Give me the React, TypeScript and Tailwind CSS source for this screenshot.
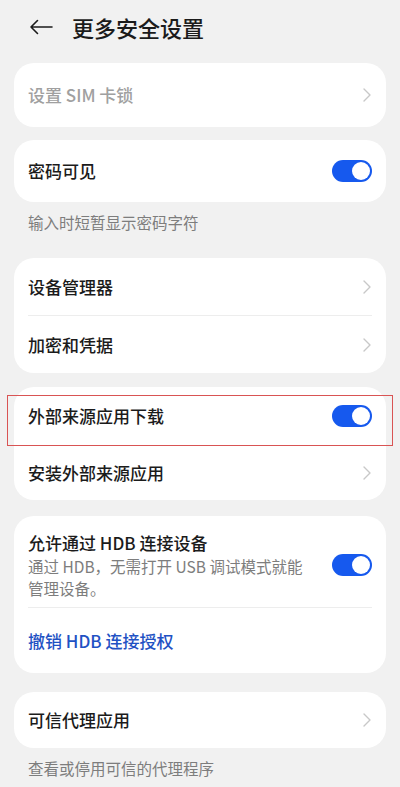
import React from "react";

const FONT = "font-['Noto_Sans_CJK_SC','Noto_Sans',sans-serif]";

const Chevron = () => (
  <svg width="10" height="16" viewBox="0 0 10 16" fill="none" className="shrink-0">
    <path d="M2 2l6 6-6 6" stroke="#c8c8c8" strokeWidth="1.4" strokeLinecap="round" strokeLinejoin="round" />
  </svg>
);

const Toggle = () => (
  <div className="w-[40px] h-[22px] rounded-full bg-[#1659ee] flex items-center justify-end pr-[2px] shrink-0">
    <div className="w-[18px] h-[18px] rounded-full bg-white" />
  </div>
);

const Card = ({ children }: { children: React.ReactNode }) => (
  <div className="bg-white rounded-[20px] px-[14px]">{children}</div>
);

const Row = ({
  label,
  right,
  height = "h-[57px]",
  muted = false,
}: {
  label: string;
  right: React.ReactNode;
  height?: string;
  muted?: boolean;
}) => (
  <div className={`flex items-center justify-between ${height}`}>
    <span className={`text-[17px] font-medium ${muted ? "text-[#a0a0a0]" : "text-[#1b1b1b]"}`}>{label}</span>
    {right}
  </div>
);

const Caption = ({ text }: { text: string }) => (
  <div className="px-[14px] pt-[9px] text-[15.5px] text-[#7d7d7d] leading-[22px]">{text}</div>
);

export default function App() {
  return (
    <div className={`${FONT} w-[400px] min-h-[787px] bg-[#f1f1f1] overflow-hidden`}>
      <div className="flex items-center h-[52px] pl-[29px] pt-[2px]">
        <svg width="24" height="16" viewBox="0 0 24 16" fill="none">
          <path d="M23 8H2M8.5 1.5L2 8l6.5 6.5" stroke="#1b1b1b" strokeWidth="1.6" strokeLinecap="round" strokeLinejoin="round" />
        </svg>
        <h1 className="ml-[19px] text-[22px] font-medium text-[#1b1b1b]">更多安全设置</h1>
      </div>

      <div className="px-[14px] pt-[11px] pb-[10px] flex flex-col">
        <Card>
          <Row label="设置 SIM 卡锁" right={<Chevron />} height="h-[64px]" muted />
        </Card>

        <div className="mt-[13px]">
          <Card>
            <Row label="密码可见" right={<Toggle />} height="h-[62px]" />
          </Card>
          <Caption text="输入时短暂显示密码字符" />
        </div>

        <div className="mt-[25px]">
          <Card>
            <Row label="设备管理器" right={<Chevron />} />
            <div className="h-px bg-[#ededed]" />
            <Row label="加密和凭据" right={<Chevron />} />
          </Card>
        </div>

        <div className="mt-[14px]">
          <Card>
            <div className="relative">
              <Row label="外部来源应用下载" right={<Toggle />} height="h-[58px]" />
              <div className="absolute top-[8px] -bottom-px -left-[21px] -right-[21px] border border-[#d95454] pointer-events-none" />
            </div>
            <Row label="安装外部来源应用" right={<Chevron />} height="h-[55px]" />
          </Card>
        </div>

        <div className="mt-[16px]">
          <Card>
            <div className="flex items-center justify-between pt-[15px] pb-[8px]">
              <div className="flex flex-col">
                <span className="text-[17px] font-medium leading-[24px] text-[#1b1b1b]">允许通过 HDB 连接设备</span>
                <span className="text-[15.5px] leading-[22px] text-[#7d7d7d] w-[285px]">
                  通过 HDB，无需打开 USB 调试模式就能管理设备。
                </span>
              </div>
              <Toggle />
            </div>
            <div className="h-px bg-[#ededed]" />
            <div className="h-[65px] flex items-center">
              <span className="text-[17px] font-medium text-[#1f52c4]">撤销 HDB 连接授权</span>
            </div>
          </Card>
        </div>

        <div className="mt-[19px]">
          <Card>
            <Row label="可信代理应用" right={<Chevron />} height="h-[56px]" />
          </Card>
          <Caption text="查看或停用可信的代理程序" />
        </div>
      </div>
    </div>
  );
}
